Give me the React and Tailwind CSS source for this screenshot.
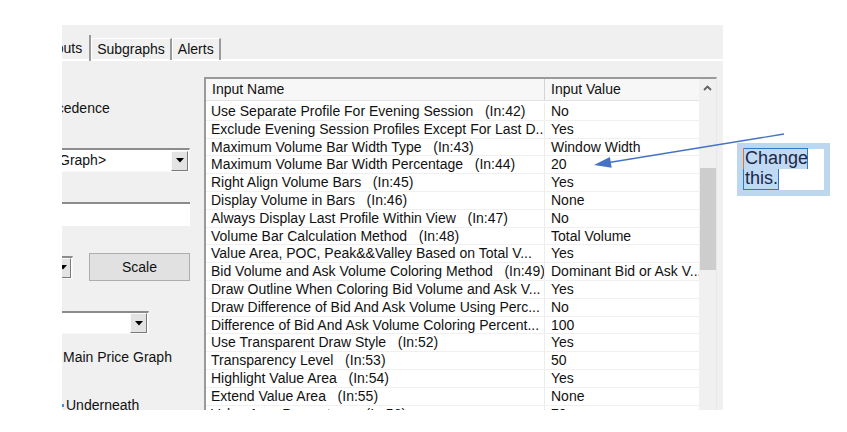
const rows = [
  ['Use Separate Profile For Evening Session', '(In:42)', 'No'],
  ['Exclude Evening Session Profiles Except For Last D...', '', 'Yes'],
  ['Maximum Volume Bar Width Type', '(In:43)', 'Window Width'],
  ['Maximum Volume Bar Width Percentage', '(In:44)', '20'],
  ['Right Align Volume Bars', '(In:45)', 'Yes'],
  ['Display Volume in Bars', '(In:46)', 'None'],
  ['Always Display Last Profile Within View', '(In:47)', 'No'],
  ['Volume Bar Calculation Method', '(In:48)', 'Total Volume'],
  ['Value Area, POC, Peak&&Valley Based on Total V...', '', 'Yes'],
  ['Bid Volume and Ask Volume Coloring Method', '(In:49)', 'Dominant Bid or Ask V...'],
  ['Draw Outline When Coloring Bid Volume and Ask V...', '', 'Yes'],
  ['Draw Difference of Bid And Ask Volume Using Perc...', '', 'No'],
  ['Difference of Bid And Ask Volume Coloring Percent...', '', '100'],
  ['Use Transparent Draw Style', '(In:52)', 'Yes'],
  ['Transparency Level', '(In:53)', '50'],
  ['Highlight Value Area', '(In:54)', 'Yes'],
  ['Extend Value Area', '(In:55)', 'None'],
  ['Value Area Percentage', '(In:56)', '70'],
];

function DropArrow() {
  return (
    <svg width="8" height="5" viewBox="0 0 8 5">
      <polygon points="0,0 8,0 4,4.5" fill="#000" />
    </svg>
  );
}

function Combo({ className, text }) {
  return (
    <div
      className={`flex items-center bg-white border-t-2 border-l-2 border-[#8c8c8c] border-r border-b border-r-[#f8f8f8] border-b-[#f8f8f8] ${className}`}
    >
      <span className="flex-1 whitespace-nowrap overflow-hidden text-[14px] text-[#111] pl-[27px]">
        {text}
      </span>
      <div className="flex-none w-[17px] h-[20px] mr-[1px] flex items-center justify-center bg-[#e3e3e3] border border-t-[#fafafa] border-l-[#fafafa] border-r-[#7a7a7a] border-b-[#7a7a7a]">
        <DropArrow />
      </div>
    </div>
  );
}

function Tab({ label, active }) {
  if (active) {
    return (
      <div className="flex items-center h-[26px] -ml-[20px] pl-[2px] pr-[7px] border-r-2 border-[#9a9a9a] text-[14px] text-[#111]">
        Inputs
      </div>
    );
  }
  return (
    <div className="flex items-center h-[22px] mt-[3px] px-[5px] border-t border-l border-white border-r-2 border-r-[#9a9a9a] text-[14px] text-[#111]">
      {label}
    </div>
  );
}

export default function App() {
  return (
    <div className="relative w-[847px] h-[432px] bg-white overflow-hidden font-['Liberation_Sans',sans-serif]">
      <div className="ml-[62px] mt-[25px] w-[661px] h-[385px] bg-[#f0f0f0] overflow-hidden">
        {/* tab strip */}
        <div className="flex items-start h-[36px] pt-[10px] border-b-2 border-b-white">
          <Tab active />
          <Tab label="Subgraphs" />
          <Tab label="Alerts" />
        </div>

        <div className="flex">
          {/* left settings column */}
          <div className="flex-none w-[142px] flex flex-col">
            <div className="mt-[39px] h-[17px] leading-[17px] -ml-[27px] text-[14px] text-[#111] whitespace-nowrap">
              Precedence
            </div>
            <Combo className="mt-[31px] h-[24px] w-[160px] -ml-[32px]" text="Graph>" />
            <div className="mt-[30px] h-[24px] w-[160px] -ml-[32px] bg-white border-t-2 border-l-2 border-[#8c8c8c]" />
            <div className="mt-[27px] h-[28px] flex items-center">
              <Combo className="h-[23px] w-[71px] -ml-[60px]" text="" />
              <button className="ml-[16px] w-[101px] h-[28px] bg-[#e1e1e1] border border-[#adadad] text-[14px] text-[#111]">
                Scale
              </button>
            </div>
            <Combo className="mt-[30px] h-[23px] w-[120px] -ml-[33px]" text="" />
            <div className="mt-[15px] h-[17px] leading-[17px] ml-[1px] text-[14px] text-[#111] whitespace-nowrap">
              Main Price Graph
            </div>
            <div className="mt-[31px] h-[17px] flex items-center text-[14px] text-[#111] whitespace-nowrap">
              <span className="w-[2px] h-[3px] bg-[#4a90d9] mr-[2px]" />
              Underneath
            </div>
          </div>

          {/* inputs list */}
          <div className="flex-none mt-[16px] w-[513px] h-[340px] flex bg-white border-t-2 border-l-2 border-[#9a9a9a] border-r border-r-[#e8e8e8]">
            <div className="w-[493px] flex flex-col">
              <div className="flex h-[22px] bg-[#f7f7f7] border-b border-[#e2e2e2] text-[14px] text-[#111]">
                <div className="w-[339px] pl-[6px] flex items-center border-r border-[#d4d4d4]">
                  Input Name
                </div>
                <div className="flex-1 pl-[6px] flex items-center">Input Value</div>
              </div>
              <div className="pt-[2px] flex flex-col">
                {rows.map(([name, tag, value], i) => (
                  <div
                    key={i}
                    className="flex h-[17.8px] border-b border-[#f0f0f0] text-[14px] leading-[17px] text-[#111]"
                  >
                    <div className="w-[339px] pl-[5px] border-r border-[#ececec] whitespace-pre overflow-hidden">
                      {tag ? `${name}   ${tag}` : name}
                    </div>
                    <div className="flex-1 pl-[6px] whitespace-nowrap overflow-hidden">{value}</div>
                  </div>
                ))}
              </div>
            </div>
            <div className="w-[17px] bg-[#f0f0f0] flex flex-col">
              <div className="h-[17px] flex items-center justify-center">
                <svg width="9" height="6" viewBox="0 0 9 6">
                  <polyline points="1,5 4.5,1.5 8,5" fill="none" stroke="#606060" strokeWidth="1.8" />
                </svg>
              </div>
              <div className="mt-[72px] h-[102px] ml-[1px] bg-[#cdcdcd]" />
            </div>
          </div>
        </div>
      </div>

      {/* pointer arrow */}
      <svg className="absolute left-0 top-0 pointer-events-none" width="847" height="432">
        <line x1="784" y1="134" x2="606" y2="163" stroke="#4472c4" strokeWidth="1.3" />
        <polygon points="594,165 611.7,167.7 609.9,156.9" fill="#4472c4" />
      </svg>

      {/* callout text box */}
      <div className="absolute left-[737px] top-[143px] w-[93px] h-[53px] border-[6px] border-[#bdd7ee] bg-white">
        <div className="relative -mt-[1px] text-[18px] leading-[19px] text-[#1c2848]">
          <div className="w-[65px] h-[21px] bg-[#bfdaf2] border border-[#2a7bd0] border-b-0 pl-[1px]">Change</div>
          <div className="w-[36px] h-[21px] bg-[#bfdaf2] border border-[#2a7bd0] border-t-0 pl-[1px]">this.</div>
          <span className="absolute left-0 top-0 w-[1px] h-[21px] bg-[#e0782a]" />
        </div>
      </div>
    </div>
  );
}
